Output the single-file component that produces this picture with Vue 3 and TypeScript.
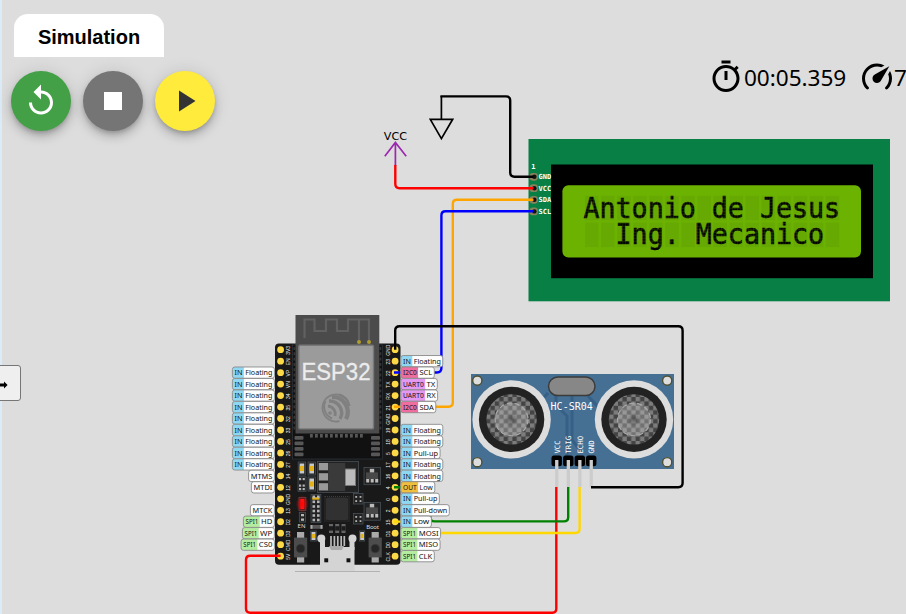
<script setup lang="ts">
interface PinLabel {
  row: number
  bus?: string
  text: string
  width: number
  split?: number
  tone?: string
}

const PITCH = 11.47
const pinY = (row: number): number => 349.7 + row * PITCH

const leftNames = ['3V3', 'EN', 'VP', 'VN', '34', '35', '32', '33', '25', '26', '27', '14', '12', 'GND', '13', 'D2', 'D3', 'CMD', '5V']
const rightNames = ['GND', '23', '22', 'TX', 'RX', '21', 'GND', '19', '18', '5', '17', '16', '4', '0', '2', '15', 'D1', 'D0', 'CLK']

const floating = (row: number): PinLabel => ({ row, bus: 'IN', text: 'Floating', width: 42, split: 11.5, tone: 'in' })

const leftLabels: PinLabel[] = [
  ...[2, 3, 4, 5, 6, 7, 8, 9, 10].map(floating),
  { row: 11, text: 'MTMS', width: 25.8 },
  { row: 12, text: 'MTDI', width: 23 },
  { row: 14, text: 'MTCK', width: 24 },
  { row: 15, bus: 'SPI1', text: 'HD', width: 31, split: 16.3, tone: 'spi' },
  { row: 16, bus: 'SPI1', text: 'WP', width: 32, split: 16.3, tone: 'spi' },
  { row: 17, bus: 'SPI1', text: 'CS0', width: 33.3, split: 16.3, tone: 'spi' },
]

const rightLabels: PinLabel[] = [
  floating(1),
  { row: 2, bus: 'I2C0', text: 'SCL', width: 33.5, split: 17.3, tone: 'i2c' },
  { row: 3, bus: 'UART0', text: 'TX', width: 36.5, split: 24.3, tone: 'uart' },
  { row: 4, bus: 'UART0', text: 'RX', width: 36.8, split: 24.3, tone: 'uart' },
  { row: 5, bus: 'I2C0', text: 'SDA', width: 35, split: 17.3, tone: 'i2c' },
  floating(7),
  floating(8),
  { row: 9, bus: 'IN', text: 'Pull-up', width: 39.3, split: 11.5, tone: 'in' },
  floating(10),
  floating(11),
  { row: 12, bus: 'OUT', text: 'Low', width: 34, split: 17.3, tone: 'out' },
  { row: 13, bus: 'IN', text: 'Pull-up', width: 38.5, split: 11.5, tone: 'in' },
  { row: 14, bus: 'IN', text: 'Pull-down', width: 48.5, split: 11.5, tone: 'in' },
  { row: 15, bus: 'IN', text: 'Low', width: 30.6, split: 11.5, tone: 'in' },
  { row: 16, bus: 'SPI1', text: 'MOSI', width: 39.8, split: 16.6, tone: 'spi' },
  { row: 17, bus: 'SPI1', text: 'MISO', width: 39.3, split: 16.6, tone: 'spi' },
  { row: 18, bus: 'SPI1', text: 'CLK', width: 33.5, split: 16.6, tone: 'spi' },
]

const labels = [
  ...leftLabels.map((l) => ({ ...l, x: 274.4 - l.width })),
  ...rightLabels.map((l) => ({ ...l, x: 400.8 })),
]

const lcdRows = [
  { text: 'Antonio de Jesus', y: 195.8 },
  { text: '  Ing. Mecanico ', y: 222.6 },
]
const lcdPins = [
  { name: 'GND', y: 176.8 },
  { name: 'VCC', y: 188.2 },
  { name: 'SDA', y: 199.8 },
  { name: 'SCL', y: 211.4 },
]
const sonarPins = [
  { name: 'VCC', x: 556.7 },
  { name: 'TRIG', x: 568.3 },
  { name: 'ECHO', x: 579.8 },
  { name: 'GND', x: 591.2 },
]
const shieldPads = Array.from({ length: 11 }, (_, i) => 310 + i * 5)
const sidePads = [436, 441.5, 447, 452.5]
const castellations = Array.from({ length: 16 }, (_, i) => 347 + i * 5.3)
</script>

<template>
  <div class="app">
    <svg class="diagram" viewBox="0 0 906 614" width="906" height="614">
      <defs>
        <pattern id="mesh" width="8.8" height="8.8" patternUnits="userSpaceOnUse" x="2" y="1">
          <rect width="8.8" height="8.8" fill="#444" />
          <rect width="4.4" height="4.4" fill="#7c7c7c" />
          <rect x="4.4" y="4.4" width="4.4" height="4.4" fill="#7c7c7c" />
        </pattern>
        <pattern id="dots" width="2.67" height="3" patternUnits="userSpaceOnUse" x="585" y="195.8">
          <path d="M0 0H2.67M0 0V3" stroke="#67aa02" stroke-width="0.75" fill="none" />
        </pattern>
        <radialGradient id="lens">
          <stop offset="0" stop-color="#444" stop-opacity="0.5" />
          <stop offset="0.45" stop-color="#ccc" stop-opacity="0.32" />
          <stop offset="1" stop-color="#ccc" stop-opacity="0.36" />
        </radialGradient>
        <radialGradient id="glow">
          <stop offset="0" stop-color="#f00" stop-opacity="0.9" />
          <stop offset="0.5" stop-color="#f00" stop-opacity="0.5" />
          <stop offset="1" stop-color="#f00" stop-opacity="0" />
        </radialGradient>
      </defs>

      <!-- LCD 16x2 -->
      <g>
        <rect x="528.5" y="139" width="361.5" height="162.3" fill="#087f45" />
        <rect x="551" y="164.5" width="322" height="113.7" fill="#000" />
        <rect x="562.4" y="185.3" width="298.6" height="72.3" rx="6" fill="#6cb201" />
        <g v-for="row in lcdRows" :key="row.y">
          <rect v-for="c in 16" :key="c" :x="569 + c * 16.05" :y="row.y" width="13.4" height="24.4" fill="#65a902" />
          <text class="lcd-text" :transform="`translate(583.5 ${row.y + 21.8}) scale(0.919 1)`">{{ row.text }}</text>
        </g>
        <rect x="585" y="195.8" width="256" height="52" fill="url(#dots)" opacity="0.45" />
        <text class="lcd-pin" x="531.2" y="169.2">1</text>
        <g v-for="p in lcdPins" :key="p.name">
          <rect x="529.5" :y="p.y - 3.9" width="8.4" height="7.8" rx="3.4" fill="#87825b" />
          <circle cx="534.4" :cy="p.y" r="2.2" fill="#111" />
          <text class="lcd-pin" x="538.6" :y="p.y + 2.4">{{ p.name }}</text>
        </g>
      </g>

      <!-- HC-SR04 -->
      <g>
        <rect x="471" y="374" width="203" height="95" fill="#456f93" />
        <g fill="none" stroke="#376087" stroke-width="3">
          <path d="M548 393L538 404M556 396V405L567 416V456M572 396V440L580 450M588 396L602 411" />
        </g>
        <g v-for="cx in [511.6, 634]" :key="cx">
          <circle :cx="cx" cy="419.4" r="39.2" fill="#ddd" />
          <circle :cx="cx" cy="419.4" r="32.7" fill="#222" />
          <circle :cx="cx" cy="419.4" r="25.2" fill="url(#mesh)" />
          <circle :cx="cx" cy="419.4" r="16.4" fill="url(#lens)" stroke="#aaa" stroke-width="1.2" stroke-dasharray="5 3" />
        </g>
        <g v-for="cx in [477.3, 667.2]" :key="cx" fill="#ddd" stroke="#514f2e" stroke-width="1.4">
          <circle :cx="cx" cy="380.6" r="4.6" />
          <circle :cx="cx" cy="462.2" r="4.6" />
        </g>
        <rect x="548.5" y="377" width="46.5" height="18.6" rx="9.3" fill="#878787" stroke="#3b3b3b" stroke-width="1.5" />
        <text class="sonar-name" x="550.6" y="410.3">HC-SR04</text>
        <g v-for="p in sonarPins" :key="p.name">
          <rect :x="p.x - 5.2" y="455.5" width="10.4" height="10.7" rx="2.5" fill="#000" />
          <rect :x="p.x - 1.6" y="460" width="3.3" height="27" fill="#ccc" />
          <text class="sonar-pin" :transform="`translate(${p.x + 2.8} 453.6) rotate(-90)`">{{ p.name }}</text>
        </g>
      </g>

      <!-- ESP32 board -->
      <g>
        <rect x="275" y="343.4" width="125.5" height="221.4" rx="4" fill="#191919" />
        <rect x="292.5" y="345" width="90" height="114" fill="#111" stroke="#2c3238" stroke-width="0.8" />
        <rect x="295.5" y="315" width="83.8" height="118.5" fill="#4b4b4b" />
        <path d="M304.5 338V319.5H314.5V331H326V319.5H337V331H348V319.5H369V341M359 319.5V341" fill="none" stroke="#616161" stroke-width="2.2" />
        <circle cx="359" cy="342" r="2" fill="#b09c2e" />
        <circle cx="369" cy="342" r="2" fill="#b09c2e" />
        <g fill="#353535">
          <rect v-for="y in castellations" :key="y" x="293.5" :y="y" width="2" height="3" />
          <rect v-for="y in castellations" :key="`r${y}`" x="379.3" :y="y" width="2" height="3" />
        </g>
        <rect x="298.8" y="345.3" width="74.7" height="83.6" rx="1.5" fill="#9b9b9b" stroke="#787878" stroke-width="1.4" />
        <text class="chip-name" x="301.5" y="380" textLength="69" lengthAdjust="spacingAndGlyphs">ESP32</text>
        <g transform="translate(336 408)" fill="none" stroke="#808080">
          <circle r="13.6" stroke-width="1.6" stroke-dasharray="62 24" transform="rotate(75)" />
          <path d="M-4 -11A15 15 0 0 1 10 11" stroke-width="4.2" />
          <path d="M3 -13.5A16 16 0 0 1 13.5 -2" stroke-width="2.4" />
          <path d="M-7 -7A12 12 0 0 1 4 11" stroke-width="3.4" />
          <path d="M-8 -2A8 8 0 0 1 -1 8" stroke-width="2.8" />
          <path d="M-10.5 -7A12.5 12.5 0 0 0 -4 10.5" stroke-width="2" />
          <circle cx="-6" cy="5" r="1.8" fill="#808080" stroke="none" />
        </g>
        <g fill="#575757">
          <rect v-for="x in shieldPads" :key="x" :x="x" y="434" width="2.8" height="3.6" />
          <rect v-for="y in sidePads" :key="y" x="294.5" :y="y" width="9" height="3.8" rx="1" />
          <rect v-for="y in sidePads" :key="`s${y}`" x="371" :y="y" width="9" height="3.8" rx="1" />
        </g>

        <!-- passives -->
        <g fill="#222" stroke="#465058" stroke-width="0.8">
          <rect x="298.2" y="462" width="7.4" height="13" />
          <rect x="308" y="462" width="7.4" height="13" />
          <rect x="298" y="476.8" width="8" height="14.5" />
          <rect x="308" y="477" width="7.4" height="14" />
          <rect x="311" y="494.5" width="9.8" height="28" />
          <rect x="299" y="497.5" width="6.8" height="13" />
          <rect x="299.3" y="512.5" width="6.3" height="9.6" />
          <rect x="310.7" y="531" width="5.6" height="10" />
          <rect x="317.5" y="461.5" width="41" height="31" />
          <rect x="364" y="467.5" width="16.5" height="17.2" />
          <rect x="364" y="502.5" width="16.5" height="17.7" />
          <rect x="353.5" y="493.5" width="9.5" height="10.5" />
          <rect x="353.5" y="513.5" width="9.5" height="10.5" />
          <rect x="359.5" y="531" width="5.2" height="10" />
        </g>
        <g fill="#c8c8c8">
          <rect x="299.6" y="463.5" width="4.6" height="10" />
          <rect x="309.4" y="463.5" width="4.6" height="10" />
          <rect x="309.4" y="478.5" width="4.6" height="11" />
          <rect x="311.5" y="532" width="4" height="8" />
          <rect x="360.2" y="532" width="3.8" height="8" />
          <rect x="318.8" y="463" width="9.4" height="7.3" fill="#999" />
          <rect x="318.8" y="473.2" width="9.4" height="7.3" fill="#999" />
          <rect x="318.8" y="483.2" width="9.4" height="7.3" fill="#999" />
          <rect x="345" y="469" width="10.5" height="16.5" fill="#bbb" stroke="#777" />
        </g>
        <g fill="#e3b21b">
          <rect x="299.8" y="466" width="4.2" height="5" />
          <rect x="309.6" y="466" width="4.2" height="5" />
          <rect x="309.6" y="481.5" width="4.2" height="5" />
          <rect x="312" y="534" width="3" height="4" />
          <rect x="360.7" y="534" width="2.8" height="4" />
          <rect x="312.2" y="497.2" width="7.4" height="2.5" />
        </g>
        <rect x="328.2" y="463" width="17" height="28" fill="#3a3a3a" />
        <g fill="#b5b5b5">
          <template v-for="y in [495.5, 500.5, 505.2, 509.7, 514.2, 518.7]" :key="y">
            <rect x="312.5" :y="y" width="2.6" height="2.6" />
            <rect x="317" :y="y" width="2.6" height="2.6" />
          </template>
          <template v-for="y in [478, 484.5, 488]" :key="`a${y}`">
            <rect x="299" :y="y" width="2.2" height="2.2" />
            <rect x="302.6" :y="y" width="2.2" height="2.2" />
          </template>
          <rect x="301" y="514" width="3" height="2.3" />
          <rect x="301" y="518.5" width="3" height="2.3" />
          <template v-for="y in [496, 516]" :key="`b${y}`">
            <rect x="355.3" :y="y" width="1.8" height="1.8" />
            <rect x="359.6" :y="y" width="1.8" height="1.8" />
            <rect x="355.3" :y="y + 4.2" width="1.8" height="1.8" />
            <rect x="359.6" :y="y + 4.2" width="1.8" height="1.8" />
          </template>
        </g>
        <rect x="326" y="497.5" width="22" height="22.5" rx="1.5" fill="#313131" />
        <rect x="325" y="496.5" width="24" height="24.5" fill="none" stroke="#3c3c3c" stroke-width="1.2" stroke-dasharray="1 1" />
        <g v-for="y in [468.8, 503.8]" :key="`t${y}`">
          <rect x="369.8" :y="y" width="4.4" height="4" fill="#bbb" />
          <rect x="366" :y="y + 3.6" width="12" height="6.6" fill="#484848" />
          <rect x="366.2" :y="y + 10.2" width="3" height="3.5" fill="#bbb" />
          <rect x="370.7" :y="y + 10.2" width="3" height="3.5" fill="#bbb" />
          <rect x="375.2" :y="y + 10.2" width="3" height="3.5" fill="#bbb" />
        </g>
        <rect x="310.5" y="525" width="12" height="3.8" fill="#575757" />
        <rect x="310.5" y="525" width="2" height="3.8" fill="#aaa" />
        <rect x="320.5" y="525" width="2" height="3.8" fill="#aaa" />
        <g v-for="x in [329, 335.2, 341.5]" :key="`u${x}`">
          <rect :x="x" y="524" width="4" height="9" fill="#666" />
          <rect :x="x" y="526.2" width="4" height="4.4" fill="#1c1c1c" />
        </g>
        <rect x="300.3" y="499" width="4" height="10" fill="#f22" />
        <ellipse cx="302.3" cy="504" rx="6.5" ry="9" fill="url(#glow)" />
        <text class="silk" x="297.6" y="528.3">EN</text>
        <text class="silk" x="366.3" y="529" textLength="12.5">Boot</text>
        <g v-for="x in [300.6, 375.2]" :key="`k${x}`">
          <rect :x="x - 3.6" y="532" width="7.2" height="30.5" fill="#aaa" />
          <rect :x="x - 6.6" y="537.6" width="13.2" height="19.8" fill="#4c4c4c" />
          <circle :cx="x" cy="548.6" r="4.1" fill="#262626" stroke="#383838" />
        </g>

        <!-- micro USB -->
        <path d="M295 571.5H380" stroke="#b2b2b2" stroke-width="1" />
        <g fill="#d4d4d4">
          <rect x="320" y="547" width="34.5" height="24" />
          <rect x="320" y="538" width="5" height="12" />
          <rect x="349.5" y="538" width="5" height="12" />
          <circle cx="321.3" cy="538.4" r="4" />
          <circle cx="352.5" cy="538.4" r="4" />
        </g>
        <path d="M331 536V546M334.4 536V546M337.8 536V546M341.2 536V546M344.3 536V546" stroke="#bbb" stroke-width="1.7" />
        <path d="M329 546h15l-2 4h-11z" fill="#aaa" />
        <rect x="324.3" y="558.3" width="3.9" height="4" fill="#111" />
        <rect x="346.5" y="558.3" width="3.9" height="4" fill="#111" />

        <g v-for="(name, i) in leftNames" :key="`l${i}`">
          <circle cx="280.6" :cy="pinY(i)" r="3.4" fill="#fcd946" />
          <text class="pin-name" text-anchor="middle" :transform="`translate(290 ${pinY(i) + 0.6}) rotate(-90)`">{{ name }}</text>
        </g>
        <g v-for="(name, i) in rightNames" :key="`r${i}`">
          <circle cx="395.1" :cy="pinY(i)" r="3.4" fill="#fcd946" />
          <text class="pin-name" text-anchor="middle" :transform="`translate(390 ${pinY(i) + 0.6}) rotate(-90)`">{{ name }}</text>
        </g>
      </g>

      <!-- ground and supply symbols -->
      <path d="M441.4 96V119.3M430.3 119.3H452.7L441.4 138.6Z" fill="none" stroke="#000" stroke-width="1.7" />
      <path d="M395.4 166V142.5M384.8 156.3L395.4 142.5L406.2 156.3" fill="none" stroke="#9c27b0" stroke-width="1.7" />
      <text class="vcc" x="383.8" y="140">VCC</text>

      <g class="wires">
        <path stroke="#000" d="M440.4 96.4H506Q510.2 96.4 510.2 100.5V172.6Q510.2 176.8 514.5 176.8H533.4" />
        <path stroke="#f00" d="M395.3 165V184Q395.3 188.2 399.5 188.2H533.4" />
        <path stroke="#ffa500" d="M394 406.7H448.5Q452.8 406.7 452.8 402.5V204Q452.8 199.8 457 199.8H533.4" />
        <path stroke="#00f" d="M394 372.5H437Q441.4 372.5 441.4 368V215.5Q441.4 211.3 445.5 211.3H533.4" />
        <path stroke="#000" d="M395.2 349.7V330.5Q395.2 326.2 399.5 326.2H678.3Q682.6 326.2 682.6 330.5V483Q682.6 487.2 678.3 487.2H591" />
        <path stroke="#f00" d="M280.6 555.8H250.2Q246 555.8 246 560V608.6Q246 612.8 250.2 612.8H552.5Q556.3 612.8 556.3 608.6V487" />
        <path stroke="#008000" d="M394 487.2H426Q430.3 487.2 430.3 491.5V517.2Q430.3 521.4 434.5 521.4H564Q568.2 521.4 568.2 517.2V487" />
        <path stroke="#ffd700" d="M394 521.6H414Q418 521.6 418 525.5V529Q418 533 422 533H575.5Q579.6 533 579.6 529V487" />
      </g>

      <!-- pin function tags -->
      <g v-for="(l, i) in labels" :key="i" :transform="`translate(${l.x} ${pinY(l.row) - 5.65})`">
        <rect :width="l.width" height="11.3" rx="2.4" fill="#fdfdfd" />
        <path v-if="l.split" :class="l.tone" :d="`M2 0H${l.split}V11.3H2Q0 11.3 0 9.3V2Q0 0 2 0Z`" />
        <rect :width="l.width" height="11.3" rx="2.4" fill="none" stroke="#8a8a8a" stroke-width="0.9" />
        <text v-if="l.split" class="tag" x="2.2" y="8.3" :textLength="l.split - 3.6" lengthAdjust="spacingAndGlyphs">{{ l.bus }}</text>
        <text class="tag" :x="(l.split ?? 0.8) + 1.4" y="8.3" :textLength="l.width - (l.split ?? 0.8) - 3.4" lengthAdjust="spacingAndGlyphs">{{ l.text }}</text>
      </g>
    </svg>

    <header class="topbar">
      <div class="controls">
        <div class="tab">Simulation</div>
        <div class="buttons">
          <button class="fab restart" aria-label="Restart">
            <svg viewBox="0 0 24 24"><path d="M12 5V1L7 6l5 5V7c3.31 0 6 2.69 6 6s-2.69 6-6 6-6-2.69-6-6H4c0 4.42 3.58 8 8 8s8-3.58 8-8-3.58-8-8-8z" /></svg>
          </button>
          <button class="fab stop" aria-label="Stop">
            <svg viewBox="0 0 24 24"><path d="M6 6h12v12H6z" /></svg>
          </button>
          <button class="fab play" aria-label="Play">
            <svg viewBox="0 0 24 24"><path d="M8 5v14l11-7z" /></svg>
          </button>
        </div>
      </div>
      <div class="status">
        <svg viewBox="0 0 24 24"><path d="M15 1H9v2h6V1zm-4 13h2V8h-2v6zm8.03-6.61 1.42-1.42c-.43-.51-.9-.99-1.41-1.41l-1.42 1.42C16.07 4.74 14.12 4 12 4c-4.97 0-9 4.03-9 9s4.02 9 9 9 9-4.03 9-9c0-2.12-.74-4.07-1.97-5.61zM12 20c-3.87 0-7-3.13-7-7s3.13-7 7-7 7 3.13 7 7-3.13 7-7 7z" /></svg>
        <span class="time">00:05.359</span>
        <svg viewBox="0 0 24 24"><path d="M12,16A3,3 0 0,1 9,13C9,11.88 9.61,10.9 10.5,10.39L20.21,4.77L14.68,14.35C14.18,15.33 13.17,16 12,16M12,3C13.81,3 15.5,3.5 16.97,4.32L14.87,5.53C14,5.19 13,5 12,5A8,8 0 0,0 4,13C4,15.21 4.89,17.21 6.34,18.65H6.35C6.74,19.04 6.74,19.67 6.35,20.06C5.96,20.45 5.32,20.45 4.93,20.07V20.07C3.12,18.26 2,15.76 2,13A10,10 0 0,1 12,3M22,13C22,15.76 20.88,18.26 19.07,20.07V20.07C18.68,20.45 18.05,20.45 17.66,20.06C17.27,19.67 17.27,19.04 17.66,18.65V18.65C19.11,17.2 20,15.21 20,13C20,12 19.81,11 19.46,10.1L20.67,8C21.5,9.5 22,11.18 22,13Z" /></svg>
        <span class="speed">7</span>
      </div>
    </header>

    <button class="expander" aria-label="Expand">
      <svg viewBox="0 0 8 8" width="8" height="8"><path d="M0 2.6H4V0.6L7.6 4L4 7.4V5.4H0Z" /></svg>
    </button>
  </div>
</template>

<style>
body {
  margin: 0;
  overflow: hidden;
}
</style>

<style scoped>
.app {
  position: relative;
  width: 906px;
  height: 614px;
  overflow: hidden;
  background: linear-gradient(90deg, #dcebf8 2px, #ddd 2px);
}
.diagram {
  position: absolute;
  top: 0;
  left: 0;
}
.topbar {
  position: relative;
  display: flex;
  justify-content: space-between;
  padding: 14px 0 0 11px;
}
.tab {
  width: 150px;
  height: 43px;
  margin-left: 3px;
  border-radius: 14px 14px 0 0;
  background: #fff;
  color: #000;
  font: bold 20px/46px "Liberation Sans", Arial, sans-serif;
  text-align: center;
}
.buttons {
  display: flex;
  gap: 12px;
  margin-top: 14px;
}
.fab {
  display: grid;
  place-items: center;
  width: 60px;
  height: 60px;
  padding: 0;
  border: 0;
  border-radius: 50%;
  box-shadow: 0 3px 5px -1px rgba(0, 0, 0, 0.2), 0 6px 10px rgba(0, 0, 0, 0.14), 0 1px 18px rgba(0, 0, 0, 0.12);
}
.fab svg {
  width: 36px;
  height: 36px;
  fill: #fff;
}
.restart {
  background: #43a047;
}
.stop {
  background: #757575;
}
.play {
  background: #ffeb3b;
}
.play svg {
  fill: #333;
}
.status {
  display: flex;
  align-items: center;
  height: 36px;
  margin-top: 45px;
  color: #000;
  font: 22.6px/36px "Noto Sans", "Open Sans", sans-serif;
}
.status svg {
  width: 36px;
  height: 36px;
  flex: none;
}
.status span {
  padding-top: 2px;
}
.time {
  width: 115px;
  letter-spacing: -0.05px;
}
.speed {
  width: 12px;
  margin-left: -1px;
}
.expander {
  position: absolute;
  top: 365px;
  left: -6px;
  display: flex;
  align-items: center;
  box-sizing: border-box;
  width: 27px;
  height: 36px;
  padding: 4px 0 0 5px;
  border: 1px solid #767676;
  border-radius: 3px;
  background: #efefef;
}
.lcd-text {
  font: 29px "DejaVu Sans Mono", monospace;
  white-space: pre;
  fill: #000;
  stroke: #000;
  stroke-width: 0.55;
}
.lcd-pin {
  font: bold 7px "DejaVu Sans Mono", monospace;
  fill: #fff;
}
.sonar-name {
  font: 10px "DejaVu Sans Mono", monospace;
  fill: #fff;
}
.sonar-pin {
  font: 7.4px "DejaVu Sans Mono", monospace;
  fill: #fff;
}
.chip-name {
  font: 23.5px "Liberation Sans", Arial, sans-serif;
  fill: #ececec;
  stroke: #ececec;
  stroke-width: 0.3;
}
.silk {
  font: 6px "Noto Sans", sans-serif;
  fill: #ddd;
}
.pin-name {
  font: 5px "Liberation Sans", Arial, sans-serif;
  fill: #eee;
}
.vcc {
  font: 11.2px "DejaVu Sans", sans-serif;
  fill: #000;
}
.wires path {
  fill: none;
  stroke-width: 2.4;
}
.tag {
  font: 7.2px "Noto Sans", "Open Sans", sans-serif;
  fill: #111;
}
.in {
  fill: #8fd8f2;
}
.i2c {
  fill: #f26d9f;
}
.uart {
  fill: #e498f2;
}
.out {
  fill: #f0bf3e;
}
.spi {
  fill: #b5eda0;
}
</style>
